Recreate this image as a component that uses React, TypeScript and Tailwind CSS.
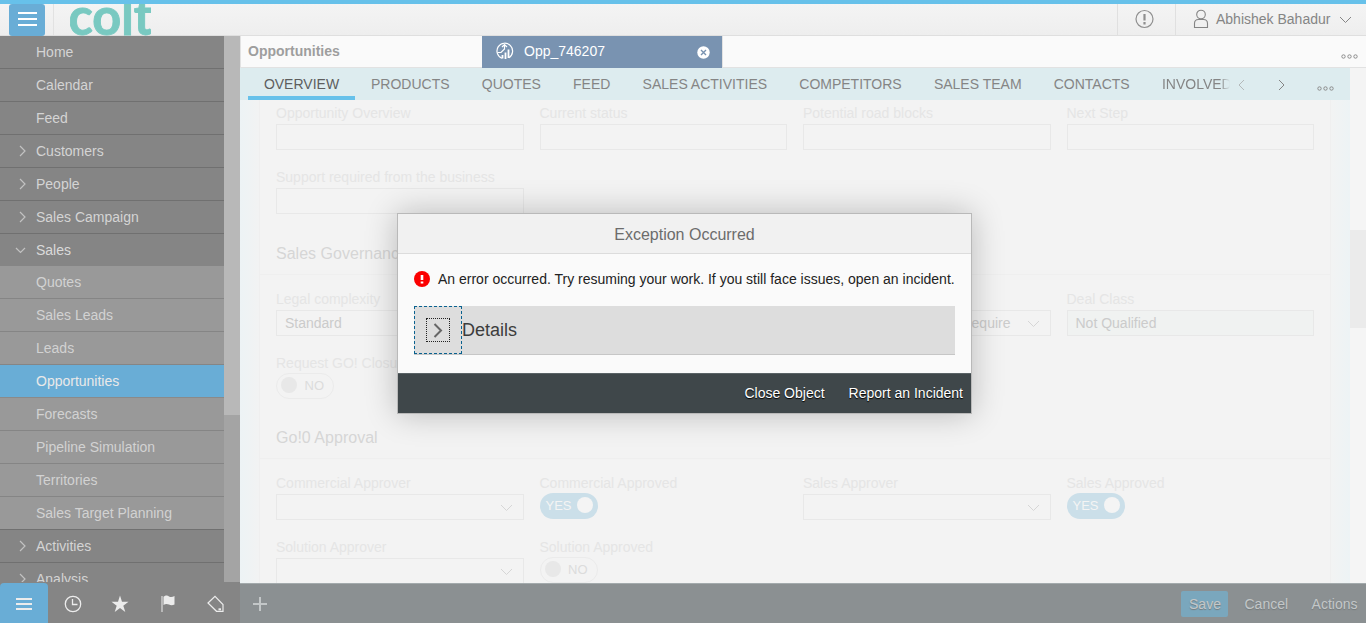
import React from "react";

type IconProps = { d: string; className?: string; w?: number; h?: number; sw?: number };

function Line({ d, className = "", w = 16, h = 16, sw = 1 }: IconProps) {
  return (
    <svg width={w} height={h} viewBox={`0 0 ${w} ${h}`} className={`shrink-0 ${className}`} fill="none" stroke="currentColor" strokeWidth={sw}>
      <path d={d} />
    </svg>
  );
}

const RIGHT = "M2 1L7 6L2 11";
const LEFT = "M7 1L2 6L7 11";
const DOWN = "M1 1L6.5 6.5L12 1";

type NavItem = { label: string; kind?: "closed" | "open" | "child" | "active"; dark?: boolean };

const nav: NavItem[] = [
  { label: "Home" },
  { label: "Calendar" },
  { label: "Feed" },
  { label: "Customers", kind: "closed" },
  { label: "People", kind: "closed" },
  { label: "Sales Campaign", kind: "closed" },
  { label: "Sales", kind: "open" },
  { label: "Quotes", kind: "child" },
  { label: "Sales Leads", kind: "child" },
  { label: "Leads", kind: "child" },
  { label: "Opportunities", kind: "active" },
  { label: "Forecasts", kind: "child" },
  { label: "Pipeline Simulation", kind: "child" },
  { label: "Territories", kind: "child" },
  { label: "Sales Target Planning", kind: "child", dark: true },
  { label: "Activities", kind: "closed" },
  { label: "Analysis", kind: "closed" },
];

function navClass(item: NavItem) {
  if (item.kind === "open") return "h-8 bg-[#858585] text-[#dadada]";
  if (item.kind === "active") return "h-[33px] border-b border-[#8a8a8a] bg-[#69add6] text-[#e9e9e9]";
  if (item.kind === "child")
    return `h-[33px] border-b bg-[#999999] text-[#d2d2d2] ${item.dark ? "border-[#707070]" : "border-[#858585]"}`;
  return "h-[33px] border-b border-[#707070] bg-[#858585] text-[#d4d4d4]";
}

function Sidebar() {
  return (
    <aside className="flex w-60 shrink-0 flex-col bg-[#858585]">
      <div className="flex h-[546px] overflow-hidden">
        <ul className="w-56">
          {nav.map((item) => (
            <li key={item.label} className={`flex items-center ${navClass(item)}`}>
              <span className="flex w-9 items-center text-[#c2c2c2]">
                {item.kind === "closed" && <Line d={RIGHT} w={9} h={12} sw={1.2} className="ml-[18px]" />}
                {item.kind === "open" && <Line d="M1 1L5.500 5.500L10 1" w={11} h={7} sw={1.200} className="ml-[15px] mt-px" />}
              </span>
              {item.label}
            </li>
          ))}
        </ul>
        <div className="w-4 bg-[#a4a4a4]">
          <div className="h-[379px] bg-[#b8b8b8]" />
        </div>
      </div>
      <div className="flex h-[41px] pt-px text-[#ececec]">
        <div className="flex w-12 items-center justify-center rounded-t-sm bg-[#69add6]">
          <Line d="M0 2H16M0 7H16M0 12H16" w={16} h={14} sw={2} className="mt-0.5" />
        </div>
        <div className="flex w-12 items-center justify-center">
          <svg width="18" height="18" viewBox="0 0 18 18" fill="none" stroke="currentColor" strokeWidth="1.3" className="mt-0.5 ml-px">
            <circle cx="9" cy="9" r="7.7" />
            <path d="M8.5 4V9.5H13.5" />
          </svg>
        </div>
        <div className="flex w-12 items-center justify-center">
          <svg width="18" height="18" viewBox="0 0 18 18" fill="currentColor" className="mt-0.5">
            <path d="M9 .5L11 6.8H17.5L12.3 10.7L14.3 17L9 13.1L3.7 17L5.7 10.7L.5 6.8H7Z" />
          </svg>
        </div>
        <div className="flex w-12 items-center justify-center">
          <svg width="14" height="18" viewBox="0 0 14 18" className="mt-0.5">
            <path d="M1 1V17" stroke="currentColor" fill="none" />
            <path d="M2.5 1.8C5 -.3 7 .6 8 1.4C9.500 2.3 11.500 2.200 13.500 1V9.500C11.500 10.600 9.500 10.400 8 9.600C6 8.500 4 9 2.500 10Z" fill="currentColor" />
          </svg>
        </div>
        <div className="flex w-12 items-center justify-center">
          <svg width="18" height="18" viewBox="0 0 18 18" fill="none" stroke="currentColor" strokeWidth="1.2" className="mt-0.5">
            <path d="M1 8L8 1.300L16 9.500V16.300H9.500Z" />
            <path d="M11.500 14.300H14" strokeWidth="2" />
          </svg>
        </div>
      </div>
    </aside>
  );
}

function Header() {
  return (
    <header className="flex h-9 shrink-0 border-t-4 border-b border-t-[#67c1ea] border-b-[#dfdfdf] bg-linear-to-b from-[#f4f4f4] to-[#eeeeee]">
      <div className="ml-[9px] flex h-8 w-9 items-center justify-center rounded-[3px] bg-[#69add6] text-white">
        <Line d="M0 1H19M0 7H19M0 13H19" w={19} h={14} sw={2} className="-mt-0.5" />
      </div>
      <div className="ml-2 w-px bg-[#e2e2e2]" />
      <div className="ml-4 h-8 w-[81px] overflow-hidden">
        <svg width="81" height="32" viewBox="0 0 81 32">
          <text x="-1.500" y="31.300" textLength="84" lengthAdjust="spacingAndGlyphs" fill="#79c9c1" stroke="#79c9c1" strokeWidth="0.900" fontFamily="Lato" fontWeight="700" fontSize="51">
            colt
          </text>
        </svg>
      </div>
      <div className="ml-auto flex w-[59px] items-center border-x border-[#e0e0e0] pl-[17px] text-[#8f8f8f]">
        <svg width="20" height="20" viewBox="0 0 20 20" fill="none" stroke="currentColor" className="-mt-0.5">
          <circle cx="9.500" cy="10" r="8.500" strokeWidth="1.200" />
          <path d="M9.500 5V11.500M9.500 13V15.500" strokeWidth="2.200" />
        </svg>
      </div>
      <div className="flex w-[190px] items-center pl-[17px] text-[#858585]">
        <svg width="16" height="20" viewBox="0 0 16 20" fill="none" stroke="currentColor" strokeWidth="1.100" className="-mt-0.5">
          <circle cx="8" cy="5.500" r="4.300" />
          <path d="M1.500 18.500V14.500C1.500 12 3 10.500 5.500 10.500H10.500C13 10.500 14.500 12 14.500 14.500V18.500Z" />
        </svg>
        <span className="-mt-0.5 ml-[7px] whitespace-nowrap">Abhishek Bahadur</span>
        <Line d={DOWN} w={13} h={8} className="ml-[9px]" />
      </div>
    </header>
  );
}

function Dots({ className = "" }: { className?: string }) {
  return (
    <svg width="17" height="5" viewBox="0 0 17 5" fill="none" stroke="#8c8c8c" strokeWidth="1" className={className}>
      <circle cx="2.500" cy="2.500" r="1.700" />
      <circle cx="8.500" cy="2.500" r="1.700" />
      <circle cx="14.500" cy="2.500" r="1.700" />
    </svg>
  );
}

const tabs = ["PRODUCTS", "QUOTES", "FEED", "SALES ACTIVITIES", "COMPETITORS", "SALES TEAM", "CONTACTS"];

function TabStrips() {
  return (
    <>
      <div className="flex h-8 shrink-0 bg-[#fafafa]">
        <div className="flex w-[242px] items-center border-b border-l border-[#e2e2e2] pb-px pl-[7px] font-bold text-[#9e9e9e]">Opportunities</div>
        <div className="flex w-60 items-center bg-[#7993b1] pb-0.5 text-white">
          <svg width="18" height="18" viewBox="0 0 18 18" fill="none" stroke="currentColor" strokeWidth="1.200" className="ml-[14px]">
            <path d="M6 16.300A7.800 7.800 0 1 1 12.800 15.700" />
            <path d="M1.500 10.500H5L8.500 7V3M6 5L8.500 2.500L11 5" />
            <path d="M6.500 13V16.500M9.500 10.500V17M12.500 7.500V16" strokeWidth="1.800" />
          </svg>
          <span className="ml-2.5">Opp_746207</span>
          <svg width="13" height="13" viewBox="0 0 13 13" className="mt-0.5 mr-[12px] ml-auto">
            <circle cx="6.500" cy="6.500" r="6.200" fill="#fff" />
            <path d="M4 4L9 9M9 4L4 9" stroke="#7993b1" strokeWidth="1.400" />
          </svg>
        </div>
        <div className="flex flex-1 justify-end border-b border-l border-[#e2e2e2]">
          <Dots className="mt-[18px] mr-[8px]" />
        </div>
      </div>
      <div className="flex h-8 w-[1110px] shrink-0 bg-[#ddecef] pl-2 whitespace-nowrap text-[#858585]">
        <div className="flex w-[107px] justify-center border-b-4 border-[#67c1ea] leading-[33px] text-[#5e5e5e]">OVERVIEW</div>
        <div className="ml-4 flex gap-[32.2px] leading-[33px]">
          {tabs.map((t) => (
            <span key={t}>{t}</span>
          ))}
          <span className="w-[68px] overflow-hidden mask-r-from-85%">INVOLVED</span>
        </div>
        <Line d={LEFT} w={9} h={12} className="mt-[11px] ml-[7px] text-[#b4b9ba]" />
        <Line d={RIGHT} w={9} h={12} className="mt-[11px] ml-[31px]" />
        <Dots className="mt-[18px] ml-[31px]" />
      </div>
    </>
  );
}

function Field({ label, children }: { label: string; children: React.ReactNode }) {
  return (
    <div className="h-16">
      <div className="h-[22px] leading-[25px] whitespace-nowrap text-[#e5e5e5]">{label}</div>
      {children}
    </div>
  );
}

function Box({ text = "", select = false, filled = false, alignEnd = false }: { text?: string; select?: boolean; filled?: boolean; alignEnd?: boolean }) {
  return (
    <div className={`mt-px flex h-[26px] items-center border border-[#e8e8e8] px-2 text-[#cbcbcb] ${filled ? "bg-[#f0f2f1]" : ""}`}>
      <span className={`flex-1 ${alignEnd ? "pr-[16px] text-right" : ""}`}>{text}</span>
      {select && <Line d={DOWN} w={13} h={8} className="mt-0.5 mr-[2px] text-[#d6d6d6]" />}
    </div>
  );
}

function Toggle({ on }: { on: boolean }) {
  return on ? (
    <div className="flex h-[26px] w-[58px] items-center rounded-full bg-[#cbdfe9] pl-[6px] text-[13px] text-[#f4f4f4]">
      YES
      <span className="mr-[5px] -mt-0.5 ml-auto size-4 rounded-full bg-[#f4f4f4]" />
    </div>
  ) : (
    <div className="flex h-[26px] w-[58px] items-center rounded-full border border-[#ebebeb] pr-[9px] pl-1 text-[13px] text-[#dcdcdc]">
      <span className="-mt-0.5 size-4 rounded-full bg-[#e8e8e8]" />
      <span className="ml-auto">NO</span>
    </div>
  );
}

function SectionTitle({ children }: { children: React.ReactNode }) {
  return (
    <h2 className="-mx-4 mb-3 h-[44px] border-b border-[#efefef] px-4 text-base leading-[46px] tracking-[0.02px] text-[#d6d6d6]">{children}</h2>
  );
}

function Form() {
  const grid = "grid grid-cols-4 gap-x-4";
  return (
    <div className="flex min-h-0 flex-1">
      <div className="flex w-[1110px] overflow-hidden bg-[#f2f3f3]">
        <div className="w-5 shrink-0 border-r border-[#efefef] bg-linear-to-r from-[#edf3f5] to-[#f2f3f3]" />
        <div className="w-[1070px] shrink-0 bg-[#f3f3f3] px-4 pt-px">
          <div className={grid}>
            <Field label="Opportunity Overview"><Box /></Field>
            <Field label="Current status"><Box /></Field>
            <Field label="Potential road blocks"><Box /></Field>
            <Field label="Next Step"><Box /></Field>
            <Field label="Support required from the business"><Box /></Field>
          </div>
          <div className="mt-0.5">
            <SectionTitle>Sales Governance</SectionTitle>
          </div>
          <div className={grid}>
            <Field label="Legal complexity"><Box text="Standard" select /></Field>
            <Field label=""><Box select /></Field>
            <Field label=""><Box text="Require" select alignEnd /></Field>
            <Field label="Deal Class"><Box text="Not Qualified" filled /></Field>
            <Field label="Request GO! Closure"><Toggle on={false} /></Field>
          </div>
          <SectionTitle>Go!0 Approval</SectionTitle>
          <div className={grid}>
            <Field label="Commercial Approver"><Box select /></Field>
            <Field label="Commercial Approved"><Toggle on /></Field>
            <Field label="Sales Approver"><Box select /></Field>
            <Field label="Sales Approved"><Toggle on /></Field>
            <Field label="Solution Approver"><Box select /></Field>
            <Field label="Solution Approved"><Toggle on={false} /></Field>
          </div>
        </div>
        <div className="w-5 shrink-0 border-l border-[#efefef] bg-linear-to-l from-[#edf3f5] to-[#f2f3f3]" />
      </div>
      <div className="w-4 bg-[#f5f5f5] pt-[130px]">
        <div className="h-[98px] bg-[#ebebeb]" />
      </div>
    </div>
  );
}

function ActionBar() {
  return (
    <footer className="flex h-10 shrink-0 items-center border-t border-[#a3aaac] bg-[#8b9092] text-[#c3c7c8] text-shadow-[0_1px_1px_#747a7c]">
      <Line d="M8 1V15M1 8H15" sw={2} className="ml-3" />
      <span className="ml-auto flex h-[26px] w-[47px] items-center justify-center rounded-xs bg-[#7aa7bd]">Save</span>
      <span className="ml-4">Cancel</span>
      <span className="mr-[8.500px] ml-[23.500px]">Actions</span>
    </footer>
  );
}

function ErrorDialog() {
  return (
    <div role="dialog" className="absolute top-[213px] left-[397px] flex h-[201px] w-[575px] flex-col border border-[#b9b9b9] bg-[#fafafa] shadow-[0_0_30px_rgba(0,0,0,0.24)]">
      <div className="flex h-10 shrink-0 items-center justify-center border-b border-[#dcdcdc] bg-[#f1f1f1] pt-0.5 text-base text-[#6c6c6c]">Exception Occurred</div>
      <div className="flex h-[119px] flex-col px-4 pt-[17px]">
        <div className="flex items-center text-[#222]">
          <svg width="16" height="16" viewBox="0 0 16 16">
            <circle cx="8" cy="8" r="8" fill="#fb0000" />
            <path d="M8 4V9M8 10.500V12.500" stroke="#fff" strokeWidth="2.600" />
          </svg>
          <span className="ml-2 leading-4 whitespace-nowrap">An error occurred. Try resuming your work. If you still face issues, open an incident.</span>
        </div>
        <div className="mt-[19px] flex h-[49px] w-[541px] border-b border-[#c6c6c6] bg-[#dddddd]">
          <div className="flex size-12 items-center justify-center border border-dashed border-[#09618f]">
            <div className="flex size-6 items-center justify-center border border-dotted border-[#222] text-[#666]">
              <Line d="M1.500 1L8 7.500L1.500 14" w={10} h={15} sw={2} />
            </div>
          </div>
          <span className="text-lg leading-[49px] text-[#3c3c3c]">Details</span>
        </div>
      </div>
      <div className="flex h-10 items-center justify-end gap-6 border-t border-[#5a6366] bg-[#3f474a] pr-2 pb-0.5 text-white text-shadow-[0_1px_1px_#000]">
        <span>Close Object</span>
        <span>Report an Incident</span>
      </div>
    </div>
  );
}

export default function App() {
  return (
    <div className="relative flex h-[623px] w-[1366px] flex-col overflow-hidden bg-[#f4f4f4] font-['Liberation_Sans',Arial,sans-serif] text-[14px] leading-4">
      <Header />
      <div className="flex min-h-0 flex-1">
        <Sidebar />
        <main className="flex w-[1126px] flex-col">
          <TabStrips />
          <Form />
          <ActionBar />
        </main>
      </div>
      <ErrorDialog />
    </div>
  );
}
